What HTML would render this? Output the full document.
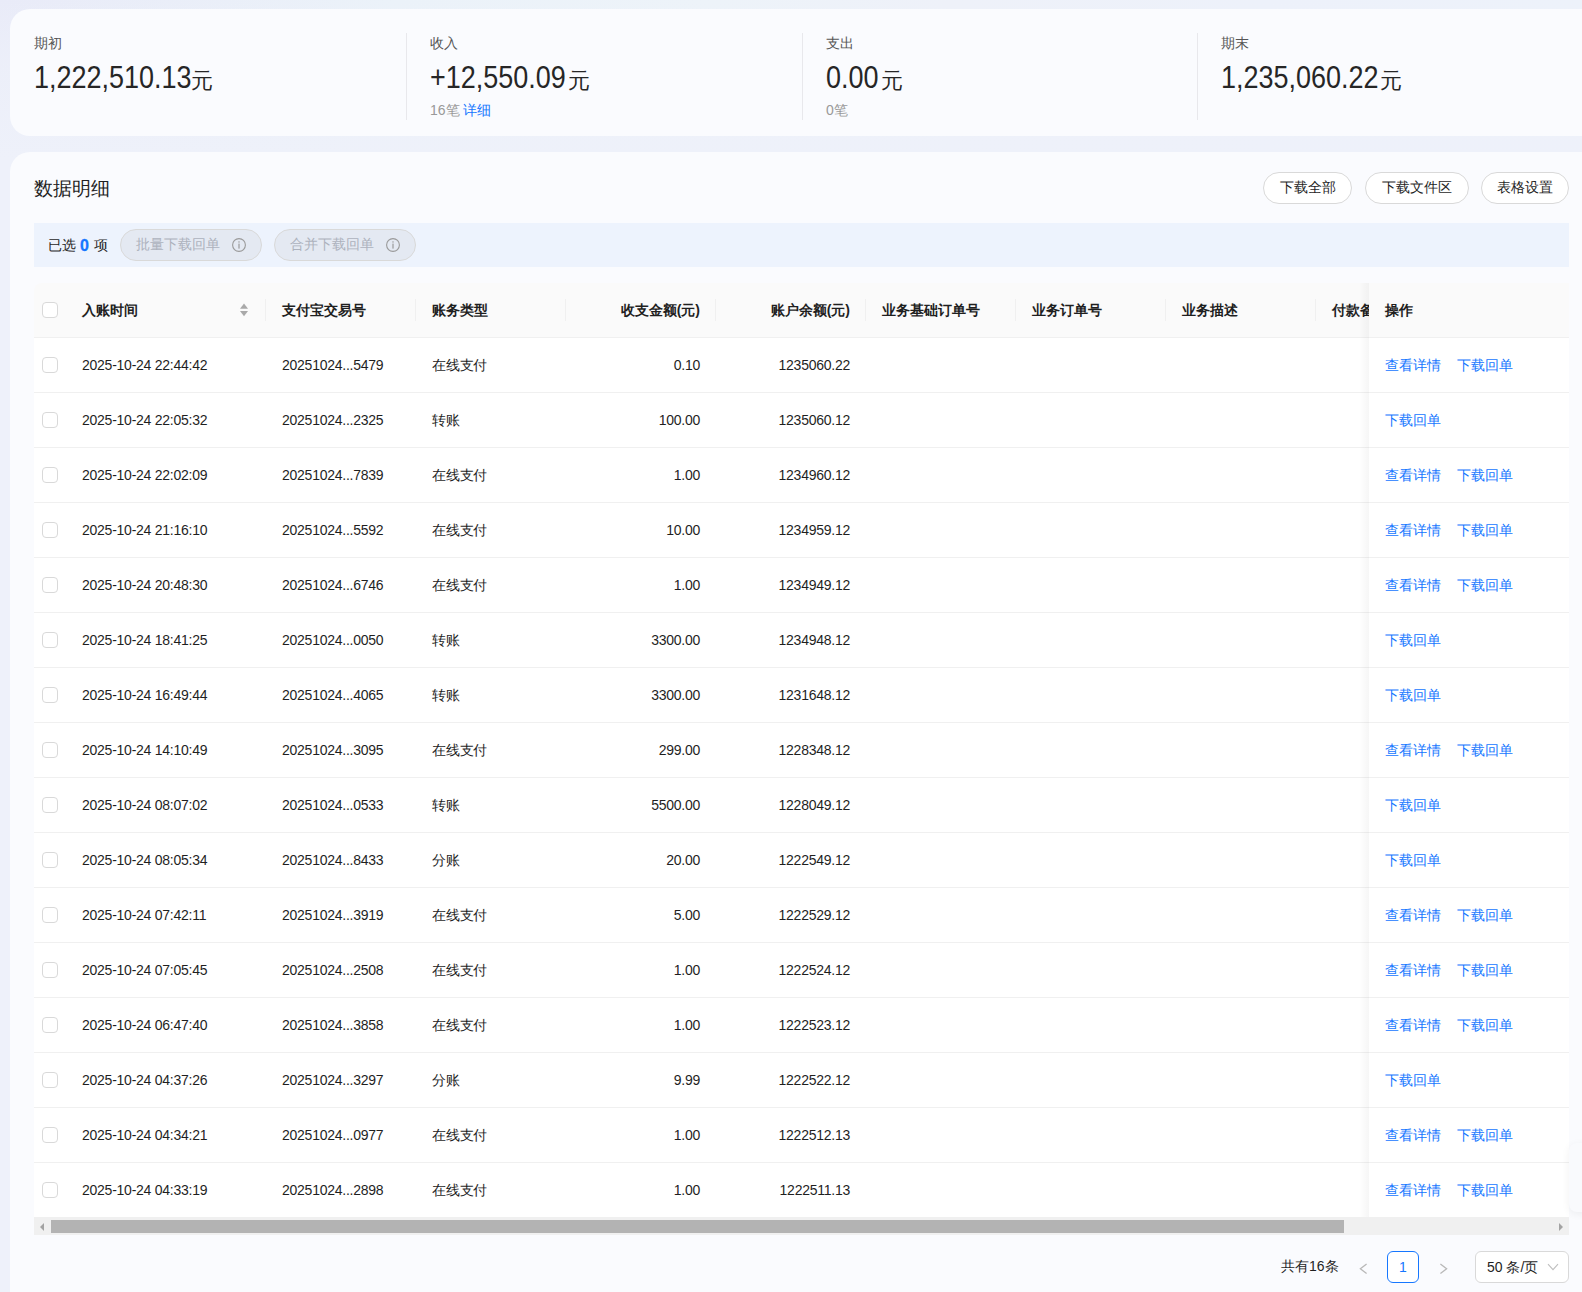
<!DOCTYPE html>
<html><head><meta charset="utf-8">
<style>
*{margin:0;padding:0;box-sizing:border-box}
html,body{width:1582px;height:1292px;overflow:hidden}
body{position:relative;font-family:"Liberation Sans",sans-serif;color:#1f1f1f;
background:linear-gradient(180deg,rgba(238,241,250,0) 0px,rgba(238,241,250,0.6) 60px,#eef1fa 160px),linear-gradient(90deg,#e9ebf8 0%,#ebf2f9 25%,#edf3f9 45%,#eef1f9 60%,#edf1fa 80%,#edf2fa 100%);}
.card{position:absolute;background:#fafbfe;border-radius:20px}
#top{left:10px;top:9px;width:1590px;height:126.5px}
#main{left:10px;top:152px;width:1590px;height:1200px}
.stat{position:absolute;top:0}
.lbl{position:absolute;font-size:14px;color:#555;white-space:nowrap}
.num{position:absolute;height:40px;color:#262626;white-space:nowrap}
.num span{display:inline-block;font-size:31px;transform:scaleX(0.87);transform-origin:0 0}
.num small{position:absolute;top:6px;font-size:22px}
.sub{position:absolute;font-size:14px;color:#999;white-space:nowrap}
.sub a{color:#1677ff}
.vdiv{position:absolute;top:33px;width:1px;height:87px;background:#e8e8ec}
.title{position:absolute;left:34px;top:176px;font-size:18.5px;color:#1f1f1f}
.pbtn{position:absolute;top:172px;height:32px;border:1px solid #d9d9d9;border-radius:16px;background:#fff;font-size:14px;color:#1f1f1f;display:flex;align-items:center;justify-content:center}
#selbar{position:absolute;left:34px;top:223px;width:1535px;height:44px;background:#edf3fd}
.seltxt{position:absolute;left:48px;top:236px;font-size:14px;color:#1f1f1f;white-space:nowrap}
.seltxt b{color:#1677ff;font-size:16px;position:relative;top:1px;-webkit-text-stroke:0.3px #1677ff;margin-right:1px}
.gbtn{position:absolute;top:229px;height:32px;border:1px solid #d9d9d9;border-radius:16px;background:#e4e9f2;font-size:14px;color:#adb2bd;display:flex;align-items:center;padding-left:15px}
.gbtn svg{position:absolute;left:110px;top:7px}
#table{position:absolute;left:34px;top:284px;width:1535px;height:950px;background:#fff;overflow:hidden}
.head{position:absolute;left:34px;top:283px;width:1535px;height:55px;background:#fafafa;border-bottom:1px solid #f0f0f0;border-radius:8px 0 0 0}
.hc{position:absolute;top:19px;font-size:14px;font-weight:bold;color:#1f1f1f;white-space:nowrap}
.sep{position:absolute;top:16px;width:1px;height:22px;background:#f0f0f0}
.row{position:absolute;left:34px;width:1535px;height:55px;border-bottom:1px solid #f0f0f0;background:#fff}
.cb{position:absolute;left:8px;top:19px;width:16px;height:16px;border:1px solid #d9d9d9;border-radius:4px;background:#fff}
.c{position:absolute;top:19px;font-size:14px;letter-spacing:-0.25px;color:#1f1f1f;white-space:nowrap}
.dt{left:48px} .no{left:248px} .ty{left:398px}
.am{right:869px} .ba{right:719px}
.ops{position:absolute;left:1335px;top:0;width:200px;height:100%;background:#fff}
#fshadow{position:absolute;left:1359px;top:283px;width:10px;height:934px;background:linear-gradient(90deg,rgba(0,0,0,0) 0%,rgba(0,0,0,0.035) 100%)}
#float{position:absolute;left:1569px;top:1143px;width:40px;height:69px;background:#f9fafd;border-radius:8px;box-shadow:0 2px 8px rgba(0,0,0,0.06)}
.lk{position:absolute;top:19px;font-size:14px;color:#1677ff;white-space:nowrap}
.l1{left:16px} .l2{left:88px}
#hscroll{position:absolute;left:34px;top:1217px;width:1535px;height:18px;background:#f0f0f0}
#thumb{position:absolute;left:17px;top:3px;width:1293px;height:13px;background:#b3b3b3}
.arrl{position:absolute;left:6px;top:5.5px;width:0;height:0;border-top:4px solid transparent;border-bottom:4px solid transparent;border-right:4px solid #a3a3a3}
.arrr{position:absolute;right:6px;top:5.5px;width:0;height:0;border-top:4px solid transparent;border-bottom:4px solid transparent;border-left:4px solid #a3a3a3}
.pg{position:absolute;font-size:14px;color:#1f1f1f;white-space:nowrap}
</style></head><body>
<div class="card" id="top"></div>
<div class="card" id="main"></div>

<div class="lbl" style="left:34px;top:35px">期初</div>
<div class="num" style="left:34px;top:60px"><span>1,222,510.13</span><small style="left:157px">元</small></div>
<div class="vdiv" style="left:406px"></div>
<div class="lbl" style="left:430px;top:35px">收入</div>
<div class="num" style="left:430px;top:60px"><span>+12,550.09</span><small style="left:138px">元</small></div>
<div class="sub" style="left:430px;top:102px">16笔 <a>详细</a></div>
<div class="vdiv" style="left:802px"></div>
<div class="lbl" style="left:826px;top:35px">支出</div>
<div class="num" style="left:826px;top:60px"><span>0.00</span><small style="left:55px">元</small></div>
<div class="sub" style="left:826px;top:102px">0笔</div>
<div class="vdiv" style="left:1197px"></div>
<div class="lbl" style="left:1221px;top:35px">期末</div>
<div class="num" style="left:1221px;top:60px"><span>1,235,060.22</span><small style="left:159px">元</small></div>

<div class="title">数据明细</div>
<div class="pbtn" style="left:1263px;width:89px">下载全部</div>
<div class="pbtn" style="left:1365px;width:104px">下载文件区</div>
<div class="pbtn" style="left:1481px;width:88px">表格设置</div>

<div id="selbar"></div>
<div class="seltxt">已选 <b>0</b> 项</div>
<div class="gbtn" style="left:120px;width:142px">批量下载回单<svg width="16" height="16" viewBox="0 0 16 16"><circle cx="8" cy="8" r="6.4" stroke="#9a9a9a" stroke-width="1.1" fill="none"/><rect x="7.4" y="4.3" width="1.2" height="1.3" fill="#9a9a9a"/><rect x="7.4" y="6.6" width="1.2" height="5" fill="#9a9a9a"/></svg></div>
<div class="gbtn" style="left:274px;width:142px">合并下载回单<svg width="16" height="16" viewBox="0 0 16 16"><circle cx="8" cy="8" r="6.4" stroke="#9a9a9a" stroke-width="1.1" fill="none"/><rect x="7.4" y="4.3" width="1.2" height="1.3" fill="#9a9a9a"/><rect x="7.4" y="6.6" width="1.2" height="5" fill="#9a9a9a"/></svg></div>

<div class="head">
<span class="cb" style="top:19px"></span>
<span class="hc" style="left:48px">入账时间</span>
<svg style="position:absolute;left:205px;top:20px" width="10" height="14" viewBox="0 0 10 14"><path d="M5 0.6L9 5.8H1Z" fill="#a9a9a9"/><path d="M5 13.2L9 7.9H1Z" fill="#a9a9a9"/></svg>
<span class="sep" style="left:231px"></span>
<span class="hc" style="left:248px">支付宝交易号</span>
<span class="sep" style="left:381px"></span>
<span class="hc" style="left:398px">账务类型</span>
<span class="sep" style="left:531px"></span>
<span class="hc" style="right:869px">收支金额(元)</span>
<span class="sep" style="left:681px"></span>
<span class="hc" style="right:719px">账户余额(元)</span>
<span class="sep" style="left:831px"></span>
<span class="hc" style="left:848px">业务基础订单号</span>
<span class="sep" style="left:981px"></span>
<span class="hc" style="left:998px">业务订单号</span>
<span class="sep" style="left:1131px"></span>
<span class="hc" style="left:1148px">业务描述</span>
<span class="sep" style="left:1281px"></span>
<span class="hc" style="left:1298px">付款备注</span>
<div class="ops" style="background:#fafafa"><span class="hc" style="left:16px">操作</span></div>
</div>
<div class="row" style="top:338px">
<span class="cb"></span><span class="c dt">2025-10-24 22:44:42</span><span class="c no">20251024...5479</span><span class="c ty">在线支付</span><span class="c am">0.10</span><span class="c ba">1235060.22</span><span class="ops"><a class="lk l1">查看详情</a><a class="lk l2">下载回单</a></span></div><div class="row" style="top:393px">
<span class="cb"></span><span class="c dt">2025-10-24 22:05:32</span><span class="c no">20251024...2325</span><span class="c ty">转账</span><span class="c am">100.00</span><span class="c ba">1235060.12</span><span class="ops"><a class="lk l1">下载回单</a></span></div><div class="row" style="top:448px">
<span class="cb"></span><span class="c dt">2025-10-24 22:02:09</span><span class="c no">20251024...7839</span><span class="c ty">在线支付</span><span class="c am">1.00</span><span class="c ba">1234960.12</span><span class="ops"><a class="lk l1">查看详情</a><a class="lk l2">下载回单</a></span></div><div class="row" style="top:503px">
<span class="cb"></span><span class="c dt">2025-10-24 21:16:10</span><span class="c no">20251024...5592</span><span class="c ty">在线支付</span><span class="c am">10.00</span><span class="c ba">1234959.12</span><span class="ops"><a class="lk l1">查看详情</a><a class="lk l2">下载回单</a></span></div><div class="row" style="top:558px">
<span class="cb"></span><span class="c dt">2025-10-24 20:48:30</span><span class="c no">20251024...6746</span><span class="c ty">在线支付</span><span class="c am">1.00</span><span class="c ba">1234949.12</span><span class="ops"><a class="lk l1">查看详情</a><a class="lk l2">下载回单</a></span></div><div class="row" style="top:613px">
<span class="cb"></span><span class="c dt">2025-10-24 18:41:25</span><span class="c no">20251024...0050</span><span class="c ty">转账</span><span class="c am">3300.00</span><span class="c ba">1234948.12</span><span class="ops"><a class="lk l1">下载回单</a></span></div><div class="row" style="top:668px">
<span class="cb"></span><span class="c dt">2025-10-24 16:49:44</span><span class="c no">20251024...4065</span><span class="c ty">转账</span><span class="c am">3300.00</span><span class="c ba">1231648.12</span><span class="ops"><a class="lk l1">下载回单</a></span></div><div class="row" style="top:723px">
<span class="cb"></span><span class="c dt">2025-10-24 14:10:49</span><span class="c no">20251024...3095</span><span class="c ty">在线支付</span><span class="c am">299.00</span><span class="c ba">1228348.12</span><span class="ops"><a class="lk l1">查看详情</a><a class="lk l2">下载回单</a></span></div><div class="row" style="top:778px">
<span class="cb"></span><span class="c dt">2025-10-24 08:07:02</span><span class="c no">20251024...0533</span><span class="c ty">转账</span><span class="c am">5500.00</span><span class="c ba">1228049.12</span><span class="ops"><a class="lk l1">下载回单</a></span></div><div class="row" style="top:833px">
<span class="cb"></span><span class="c dt">2025-10-24 08:05:34</span><span class="c no">20251024...8433</span><span class="c ty">分账</span><span class="c am">20.00</span><span class="c ba">1222549.12</span><span class="ops"><a class="lk l1">下载回单</a></span></div><div class="row" style="top:888px">
<span class="cb"></span><span class="c dt">2025-10-24 07:42:11</span><span class="c no">20251024...3919</span><span class="c ty">在线支付</span><span class="c am">5.00</span><span class="c ba">1222529.12</span><span class="ops"><a class="lk l1">查看详情</a><a class="lk l2">下载回单</a></span></div><div class="row" style="top:943px">
<span class="cb"></span><span class="c dt">2025-10-24 07:05:45</span><span class="c no">20251024...2508</span><span class="c ty">在线支付</span><span class="c am">1.00</span><span class="c ba">1222524.12</span><span class="ops"><a class="lk l1">查看详情</a><a class="lk l2">下载回单</a></span></div><div class="row" style="top:998px">
<span class="cb"></span><span class="c dt">2025-10-24 06:47:40</span><span class="c no">20251024...3858</span><span class="c ty">在线支付</span><span class="c am">1.00</span><span class="c ba">1222523.12</span><span class="ops"><a class="lk l1">查看详情</a><a class="lk l2">下载回单</a></span></div><div class="row" style="top:1053px">
<span class="cb"></span><span class="c dt">2025-10-24 04:37:26</span><span class="c no">20251024...3297</span><span class="c ty">分账</span><span class="c am">9.99</span><span class="c ba">1222522.12</span><span class="ops"><a class="lk l1">下载回单</a></span></div><div class="row" style="top:1108px">
<span class="cb"></span><span class="c dt">2025-10-24 04:34:21</span><span class="c no">20251024...0977</span><span class="c ty">在线支付</span><span class="c am">1.00</span><span class="c ba">1222512.13</span><span class="ops"><a class="lk l1">查看详情</a><a class="lk l2">下载回单</a></span></div><div class="row" style="top:1163px">
<span class="cb"></span><span class="c dt">2025-10-24 04:33:19</span><span class="c no">20251024...2898</span><span class="c ty">在线支付</span><span class="c am">1.00</span><span class="c ba">1222511.13</span><span class="ops"><a class="lk l1">查看详情</a><a class="lk l2">下载回单</a></span></div>
<div id="fshadow"></div>
<div id="float"></div>
<div id="hscroll"><span class="arrl"></span><div id="thumb"></div><span class="arrr"></span></div>

<div class="pg" style="left:1281px;top:1258px">共有16条</div>
<svg style="position:absolute;left:1359px;top:1263px" width="9" height="12" viewBox="0 0 9 12"><path d="M7.6 1L1.4 5.8L7.6 10.6" stroke="#b8b8b8" stroke-width="1.3" fill="none"/></svg>
<div style="position:absolute;left:1387px;top:1251px;width:32px;height:32px;border:1px solid #1677ff;border-radius:6px;background:#fff;color:#1677ff;font-size:14px;display:flex;align-items:center;justify-content:center">1</div>
<svg style="position:absolute;left:1439px;top:1263px" width="9" height="12" viewBox="0 0 9 12"><path d="M1.4 1L7.6 5.8L1.4 10.6" stroke="#b8b8b8" stroke-width="1.3" fill="none"/></svg>
<div style="position:absolute;left:1475px;top:1251px;width:94px;height:32px;border:1px solid #d9d9d9;border-radius:6px;background:#fff;"><span class="pg" style="left:11px;top:7px">50 条/页</span>
<svg style="position:absolute;left:71px;top:11px" width="12" height="8" viewBox="0 0 12 8"><path d="M1 1.2L6 6.6L11 1.2" stroke="#bfbfbf" stroke-width="1.1" fill="none"/></svg></div>
</body></html>
